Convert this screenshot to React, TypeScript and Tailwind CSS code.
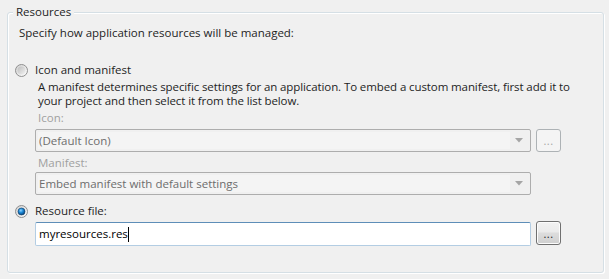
function Radio({ checked }: { checked: boolean }) {
  return (
    <svg width="13" height="13" viewBox="0 0 13 13" className="shrink-0">
      <defs>
        <linearGradient id={checked ? "rg-on" : "rg-off"} x1="0" y1="0" x2="1" y2="1">
          <stop offset="0" stopColor="#cfcfcf" />
          <stop offset="1" stopColor="#ffffff" />
        </linearGradient>
        <radialGradient id="dot" cx="0.4" cy="0.35" r="0.7">
          <stop offset="0" stopColor="#8fd3ff" />
          <stop offset="0.45" stopColor="#1c8ad8" />
          <stop offset="1" stopColor="#083c70" />
        </radialGradient>
        <linearGradient id="inner-off" x1="0" y1="0" x2="1" y2="1">
          <stop offset="0" stopColor="#bdbdbd" />
          <stop offset="1" stopColor="#f2f2f2" />
        </linearGradient>
      </defs>
      <circle cx="6.5" cy="6.5" r="6" fill={`url(#${checked ? "rg-on" : "rg-off"})`} stroke="#8f8f8f" strokeWidth="1" />
      {checked ? (
        <circle cx="6.5" cy="6.5" r="3.5" fill="url(#dot)" stroke="#0b3a66" strokeWidth="0.6" />
      ) : (
        <circle cx="6.5" cy="6.5" r="4" fill="url(#inner-off)" />
      )}
    </svg>
  );
}

function Combo({ value }: { value: string }) {
  return (
    <div className="ml-[27px] w-[496px] h-[23px] border border-[#adadad] rounded-[2px] bg-[#f0f0f0] flex items-center p-[2px]">
      <div className="flex-1 h-full bg-[#f4f4f4] flex items-center pl-[1px] text-[#6d6d6d] leading-none">
        {value}
      </div>
      <div className="w-[18px] h-full flex items-center justify-center">
        <svg width="8" height="5" viewBox="0 0 8 5">
          <path d="M0 0 H8 L4 4.5 Z" fill="#a5a5a5" />
        </svg>
      </div>
    </div>
  );
}

function Browse({ enabled }: { enabled: boolean }) {
  return enabled ? (
    <div className="w-[25px] h-[24px] ml-[5px] -mt-[1px] rounded-[3px] border border-[#707070] bg-[linear-gradient(#f2f2f2_0%,#ebebeb_45%,#dddddd_50%,#cfcfcf_100%)] shadow-[inset_0_0_0_1px_#fcfcfc] flex items-end justify-center pb-[5px] text-[#1e1e1e] leading-none">
      <span className="text-[11px] tracking-[0.5px]">...</span>
    </div>
  ) : (
    <div className="w-[25px] h-[23px] ml-[5px] rounded-[3px] border border-[#adb2b5] bg-[#f4f4f4] flex items-end justify-center pb-[5px] text-[#a5a5a5] leading-none">
      <span className="text-[11px] tracking-[0.5px]">...</span>
    </div>
  );
}

export default function App() {
  return (
    <div className="w-[609px] h-[279px] bg-[#f0f0f0] pt-[12px] pl-[7px] text-[11.5px] text-[#1e1e1e] font-['Open_Sans','Noto_Sans',sans-serif] overflow-hidden">
      <div className="relative w-[597px] h-[261px] border border-[#d5dfe5] rounded-[3px] shadow-[inset_1px_1px_0_#ffffff,1px_1px_0_#ffffff]">
        <span className="absolute left-[5px] -top-[9px] px-[3px] bg-[#f0f0f0] leading-[16px]">Resources</span>

        <div className="flex flex-col">
          <div className="mt-[12px] ml-[11px] h-[15px] leading-[15px]">
            Specify how application resources will be managed:
          </div>

          <div className="mt-[22px] ml-[7px] h-[16px] flex items-center gap-[7px]">
            <Radio checked={false} />
            <span className="leading-[16px]">Icon and manifest</span>
          </div>

          <div className="mt-[2px] ml-[30px] leading-[14px] whitespace-nowrap tracking-[-0.1px]">
            A manifest determines specific settings for an application. To embed a custom manifest, first add it to
            <br />
            your project and then select it from the list below.
          </div>

          <div className="mt-[3px] ml-[30px] h-[14px] leading-[14px] text-[#a0a0a0]">Icon:</div>

          <div className="mt-[4px] flex">
            <Combo value="(Default Icon)" />
            <Browse enabled={false} />
          </div>

          <div className="mt-[4px] ml-[30px] h-[14px] leading-[14px] text-[#a0a0a0]">Manifest:</div>

          <div className="mt-[2px] flex">
            <Combo value="Embed manifest with default settings" />
          </div>

          <div className="mt-[8px] ml-[7px] h-[16px] flex items-center gap-[7px]">
            <Radio checked={true} />
            <span className="leading-[16px]">Resource file:</span>
          </div>

          <div className="mt-[3px] flex">
            <div className="ml-[27px] w-[496px] h-[24px] border border-[#b3cde3] border-t-[#5e8eb8] rounded-[2px] bg-white flex items-center pl-[3px] text-black">
              <span>myresources.res</span>
              <span className="w-px h-[15px] bg-black" />
            </div>
            <Browse enabled={true} />
          </div>
        </div>
      </div>
    </div>
  );
}
